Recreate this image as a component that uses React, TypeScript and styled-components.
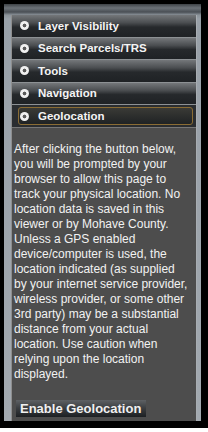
import React from "react";
import styled, { createGlobalStyle } from "styled-components";

const Global = createGlobalStyle`
  html, body { margin: 0; padding: 0; background: #ffffff; }
  body { font-family: "Liberation Sans", Arial, sans-serif; }
`;

const Frame = styled.div`
  width: 208px;
  height: 428px;
  box-sizing: border-box;
  background: #000;
  padding: 4px 7px 7px 4px;
  display: flex;
`;

const MapBack = styled.div`
  flex: 1;
  display: flex;
  flex-direction: column;
  padding: 11px 4px 0 7px;
  background:
    linear-gradient(180deg, #3e4246 0px, #6c7278 4px, #4a4f55 8px, #8a9299 11px, #98a0a8 15px, #a2a9b0 100%);
`;

const Panel = styled.div`
  flex: 1;
  display: flex;
  flex-direction: column;
  background: #4d4d4d;
  border-left: 1px solid #8e8e8e;
  border-right: 1px solid #a8adb2;
`;

const Header = styled.div`
  height: 22.5px;
  flex: none;
  display: flex;
  align-items: center;
  box-sizing: border-box;
  border-bottom: 1px solid #8d9194;
  background: linear-gradient(180deg, #74777a 0%, #4b4e51 35%, #26292c 55%, #1f2225 100%);
  color: #f4f4f4;
  font-weight: bold;
  font-size: 11.5px;
  padding-left: 8px;
  gap: 9px;
`;

const ActiveHeader = styled.div`
  height: 23px;
  flex: none;
  box-sizing: border-box;
  padding: 2px 3px 2px 6px;
  background: #2a2d30;
  border-bottom: 1px solid #777;
  display: flex;
`;

const ActiveInner = styled.div`
  flex: 1;
  display: flex;
  align-items: center;
  border: 1px solid #8a6c34;
  border-radius: 3px;
  background: linear-gradient(180deg, #3a3a36 0%, #1f2224 100%);
  color: #f4f4f4;
  font-weight: bold;
  font-size: 11.5px;
  padding-left: 1px;
  gap: 9px;
`;

const Icon = styled.span`
  width: 9px;
  height: 9px;
  border-radius: 50%;
  background: radial-gradient(circle at 50% 50%, #5a5a5a 0 1.6px, #f0f0f0 2.2px);
  flex: none;
`;

const Body = styled.div`
  padding: 14px 2px 0 2px;
  color: #f2f2f2;
  font-size: 12px;
  line-height: 15px;
  display: flex;
  flex-direction: column;
  align-items: flex-start;
`;

const Para = styled.p`
  margin: 0;
`;

const Button = styled.button`
  margin: 18px 0 0 2px;
  height: 17px;
  padding: 0 5px 0 4px;
  border: none;
  background: linear-gradient(180deg, #5e6164 0%, #3c3f42 45%, #1d2023 100%);
  color: #f0f0f0;
  font-family: "Liberation Sans", Arial, sans-serif;
  font-weight: bold;
  font-size: 13px;
  line-height: 17px;
`;

const sections = ["Layer Visibility", "Search Parcels/TRS", "Tools", "Navigation"];

const lines = [
  "After clicking the button below,",
  "you will be prompted by your",
  "browser to allow this page to",
  "track your physical location. No",
  "location data is saved in this",
  "viewer or by Mohave County.",
  "Unless a GPS enabled",
  "device/computer is used, the",
  "location indicated (as supplied",
  "by your internet service provider,",
  "wireless provider, or some other",
  "3rd party) may be a substantial",
  "distance from your actual",
  "location. Use caution when",
  "relying upon the location",
  "displayed.",
];

export default function App() {
  return (
    <>
      <Global />
      <Frame>
        <MapBack>
          <Panel>
            {sections.map((s) => (
              <Header key={s}>
                <Icon />
                <span>{s}</span>
              </Header>
            ))}
            <ActiveHeader>
              <ActiveInner>
                <Icon />
                <span>Geolocation</span>
              </ActiveInner>
            </ActiveHeader>
            <Body>
              <Para>
                {lines.map((l, i) => (
                  <React.Fragment key={i}>
                    {l}
                    {i < lines.length - 1 && <br />}
                  </React.Fragment>
                ))}
              </Para>
              <Button>Enable Geolocation</Button>
            </Body>
          </Panel>
        </MapBack>
      </Frame>
    </>
  );
}
